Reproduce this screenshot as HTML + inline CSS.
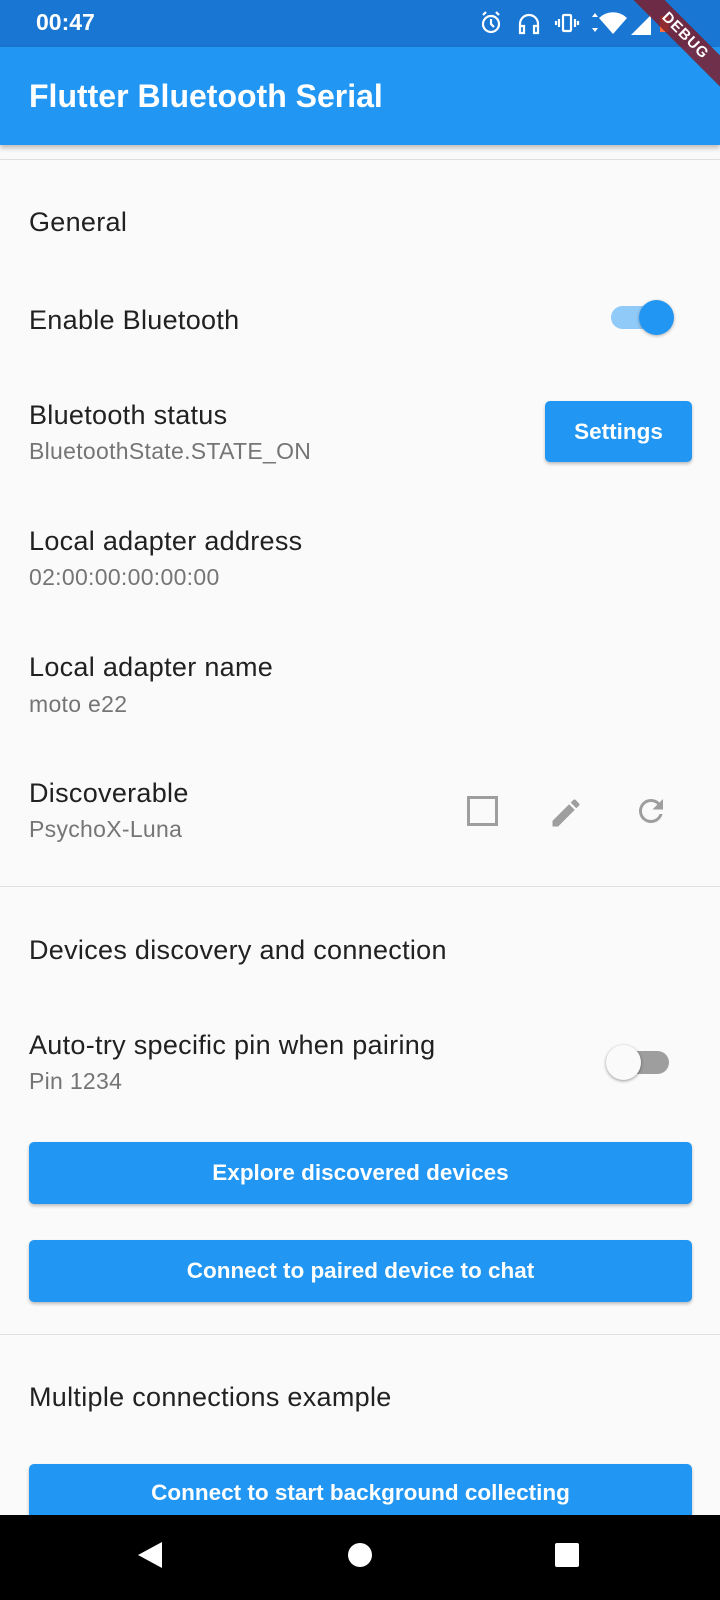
<!DOCTYPE html>
<html><head><meta charset="utf-8"><style>
*{margin:0;padding:0;box-sizing:border-box}
body{width:720px;height:1600px;position:relative;overflow:hidden;background:#fafafa;font-family:"Liberation Sans",Roboto,sans-serif;color:#212121}
.a{position:absolute}
.t{position:absolute;left:29px;font-size:27px;letter-spacing:0.3px;line-height:30px;transform:translateY(-50%);white-space:nowrap}
.s{position:absolute;left:29px;font-size:23px;letter-spacing:0.3px;color:#757575;line-height:26px;transform:translateY(-50%);white-space:nowrap}
.hr{position:absolute;left:0;width:720px;height:1px;background:#e0e0e0}
.btn{position:absolute;left:29px;width:663px;background:#2196f3;border-radius:5px;color:#fff;font-weight:bold;font-size:22.5px;display:flex;align-items:center;justify-content:center;box-shadow:0 2px 3px rgba(0,0,0,.25)}
</style></head><body>
<div class="a" style="left:0;top:0;width:720px;height:47px;background:#1976d2"></div>
<div class="a" style="left:36px;top:9px;color:#fff;font-weight:bold;font-size:23px">00:47</div>
<svg class="a" style="left:478px;top:10px" width="220" height="28" viewBox="0 0 220 28" fill="none" stroke="#fff" stroke-width="2.2">
<circle cx="13" cy="14" r="8"/><path d="M13 9v5l3 3M5 5l3-3M21 5l-3-3"/>
<path d="M42 20v-6a9 9 0 0 1 18 0v6M42 16h4v7h-4zM56 16h4v7h-4z"/>
<rect x="85" y="5" width="8" height="16" rx="1"/><path d="M81 9v8M97 9v8M78 11v4M100 11v4"/>
<path d="M117 3l3 4h-6zM117 22l3-4h-6z" fill="#fff" stroke="none"/>
<path d="M121 8a20 20 0 0 1 28 0l-14 16z" fill="#fff" stroke="none"/>
<path d="M153 25h20V5z" fill="#fff" stroke="none"/>
<rect x="182" y="6" width="9" height="16" fill="#ff7043" stroke="none"/>
</svg>
<div class="a" style="left:0;top:47px;width:720px;height:98px;background:#2196f3;box-shadow:0 3px 5px rgba(0,0,0,.25)"></div>
<div class="a" style="left:29px;top:78px;color:#fff;font-size:32px;font-weight:bold">Flutter Bluetooth Serial</div>
<div class="a" style="left:605px;top:25px;width:160px;height:22px;background:rgba(125,30,45,.85);transform:rotate(45deg);color:#fff;font-size:15px;font-weight:bold;text-align:center;line-height:22px;letter-spacing:1px">DEBUG</div>

<div class="hr" style="top:159px"></div>
<div class="t" style="top:222px">General</div>
<div class="t" style="top:320px">Enable Bluetooth</div>
<div class="a" style="left:611px;top:306px;width:52px;height:23px;border-radius:12px;background:#90caf9"></div>
<div class="a" style="left:639px;top:300px;width:35px;height:35px;border-radius:50%;background:#2196f3;box-shadow:0 1px 3px rgba(0,0,0,.3)"></div>

<div class="t" style="top:415px">Bluetooth status</div>
<div class="s" style="top:451px">BluetoothState.STATE_ON</div>
<div class="btn" style="left:545px;width:147px;top:401px;height:61px">Settings</div>

<div class="t" style="top:541px">Local adapter address</div>
<div class="s" style="top:577px">02:00:00:00:00:00</div>
<div class="t" style="top:667px">Local adapter name</div>
<div class="s" style="top:704px">moto e22</div>
<div class="t" style="top:793px">Discoverable</div>
<div class="s" style="top:829px">PsychoX-Luna</div>
<div class="a" style="left:467px;top:796px;width:31px;height:30px;border:3px solid #9e9e9e"></div>
<svg class="a" style="left:548px;top:795px" width="36" height="36" viewBox="0 0 24 24"><path fill="#9e9e9e" d="M3 17.25V21h3.75L17.81 9.94l-3.75-3.75L3 17.25zM20.71 7.04a1 1 0 0 0 0-1.41l-2.340-2.34a1 1 0 0 0-1.41 0l-1.83 1.83 3.75 3.75 1.83-1.83z"/></svg>
<svg class="a" style="left:633px;top:793px" width="36" height="36" viewBox="0 0 24 24"><path fill="#9e9e9e" d="M17.65 6.35A7.96 7.96 0 0 0 12 4a8 8 0 1 0 7.73 10h-2.08A6 6 0 1 1 12 6c1.66 0 3.14.69 4.22 1.78L13 11h7V4l-2.35 2.35z"/></svg>

<div class="hr" style="top:886px"></div>
<div class="t" style="top:950px">Devices discovery and connection</div>
<div class="t" style="top:1045px">Auto-try specific pin when pairing</div>
<div class="s" style="top:1081px">Pin 1234</div>
<div class="a" style="left:617px;top:1051px;width:52px;height:23px;border-radius:12px;background:#9e9e9e"></div>
<div class="a" style="left:606px;top:1045px;width:35px;height:35px;border-radius:50%;background:#fafafa;box-shadow:0 1px 3px rgba(0,0,0,.4)"></div>

<div class="btn" style="top:1142px;height:62px">Explore discovered devices</div>
<div class="btn" style="top:1240px;height:62px">Connect to paired device to chat</div>
<div class="hr" style="top:1334px"></div>
<div class="t" style="top:1397px">Multiple connections example</div>
<div class="btn" style="top:1464px;height:62px;align-items:flex-start;padding-top:16px">Connect to start background collecting</div>

<div class="a" style="left:0;top:1515px;width:720px;height:85px;background:#000"></div>
<svg class="a" style="left:0;top:1515px" width="720" height="85"><path d="M138 40l24-13v26z" fill="#fff"/><circle cx="360" cy="40" r="12" fill="#fff"/><rect x="555" y="28" width="24" height="24" rx="2" fill="#fff"/></svg>
</body></html>
